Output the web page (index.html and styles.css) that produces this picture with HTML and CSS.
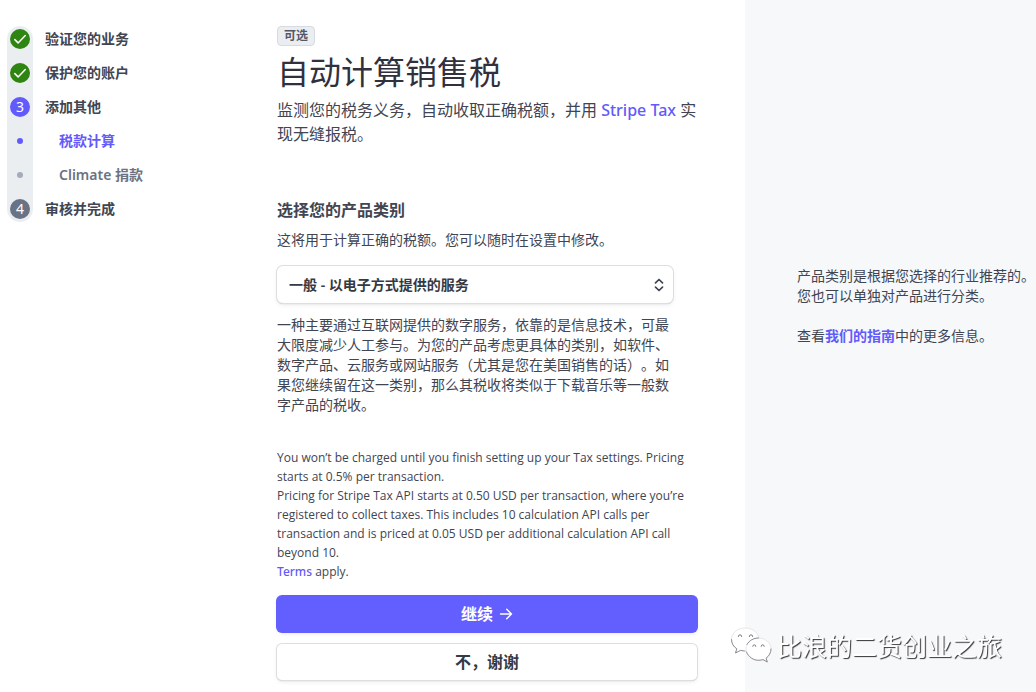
FILE: index.html
```html
<!DOCTYPE html>
<html lang="zh-CN">
<head>
    <meta charset="UTF-8">
    <meta name="viewport" content="width=device-width, initial-scale=1.0">
    <title>自动计算销售税</title>
    <link rel="stylesheet" href="styles.css">
</head>
<body>
    <div class="page">
        <nav class="sidebar">
            <ol class="steps">
                <li class="step">
                    <span class="marker done">
                        <svg width="20" height="20" viewBox="0 0 20 20" fill="none" stroke="#fff" stroke-width="1.5" stroke-linecap="round" stroke-linejoin="round"><path d="M4.800 10.600l3.300 3.300 7.200-7.400"/></svg>
                    </span>
                    <span class="step-name">验证您的业务</span>
                </li>
                <li class="step">
                    <span class="marker done">
                        <svg width="20" height="20" viewBox="0 0 20 20" fill="none" stroke="#fff" stroke-width="1.5" stroke-linecap="round" stroke-linejoin="round"><path d="M4.800 10.600l3.300 3.300 7.200-7.400"/></svg>
                    </span>
                    <span class="step-name">保护您的账户</span>
                </li>
                <li class="step">
                    <span class="marker current">3</span>
                    <span class="step-name">添加其他</span>
                </li>
                <li class="step sub active">
                    <span class="marker"><span class="dot"></span></span>
                    <span class="step-name">税款计算</span>
                </li>
                <li class="step sub">
                    <span class="marker"><span class="dot"></span></span>
                    <span class="step-name">Climate 捐款</span>
                </li>
                <li class="step">
                    <span class="marker pending">4</span>
                    <span class="step-name">审核并完成</span>
                </li>
            </ol>
        </nav>

        <main class="content">
            <span class="badge">可选</span>
            <h1>自动计算销售税</h1>
            <p class="lead">监测您的税务义务，自动收取正确税额，并用 <a href="#">Stripe Tax</a> 实现无缝报税。</p>

            <form class="tax-form">
                <h2><label for="category">选择您的产品类别</label></h2>
                <p class="hint">这将用于计算正确的税额。您可以随时在设置中修改。</p>
                <div class="select-box">
                    <select id="category" name="category">
                        <option>一般 - 以电子方式提供的服务</option>
                    </select>
                    <svg class="select-icon" width="10" height="14" viewBox="0 0 10 14" fill="none" stroke="#414552" stroke-width="1.7" stroke-linecap="round" stroke-linejoin="round"><path d="M1.500 4.800L5 1.500l3.500 3.300M1.500 9.200L5 12.500l3.500-3.300"/></svg>
                </div>
                <p class="description">一种主要通过互联网提供的数字服务，依靠的是信息技术，可最大限度减少人工参与。为您的产品考虑更具体的类别，如软件、数字产品、云服务或网站服务（尤其是您在美国销售的话）。如果您继续留在这一类别，那么其税收将类似于下载音乐等一般数字产品的税收。</p>

                <div class="fine-print" lang="en">
                    <p>You won’t be charged until you finish setting up your Tax settings. Pricing starts at 0.5% per transaction.</p>
                    <p>Pricing for Stripe Tax API starts at 0.50 USD per transaction, where you’re registered to collect taxes. This includes 10 calculation API calls per transaction and is priced at 0.05 USD per additional calculation API call beyond 10.</p>
                    <p><a href="#">Terms</a> apply.</p>
                </div>

                <button type="submit" class="btn primary">
                    继续
                    <svg width="14" height="14" viewBox="0 0 14 14" fill="none" stroke="#fff" stroke-width="1.4" stroke-linecap="round" stroke-linejoin="round"><path d="M1.500 7h11M7.700 2.200L12.500 7l-4.800 4.800"/></svg>
                </button>
                <button type="button" class="btn">不，谢谢</button>
            </form>
        </main>

        <aside class="help">
            <p>产品类别是根据您选择的行业推荐的。您也可以单独对产品进行分类。</p>
            <p>查看<a href="#">我们的指南</a>中的更多信息。</p>
        </aside>
    </div>

    <div class="watermark">
        <svg width="42" height="38" viewBox="0 0 42 38" stroke-linejoin="round">
            <g fill="#fff" stroke="#d5d7d9" stroke-width="0.6">
                <path d="M15 2C7.300 2 1.500 7 1.500 13.500c0 4 2 7.200 5.300 9.300L5.500 27l5-2.600c1.500.4 3 .6 4.500.6 8 0 14-5 14-11.500S23 2 15 2z"/>
                <path d="M28.500 12C21.500 12 16 16.800 16 23s5.500 11.300 12.500 11.300c1.600 0 3-.3 4.500-.7l4.300 2.400-1.200-3.900c3-2 4.900-5.400 4.900-9.100C41 16.800 35.500 12 28.500 12z"/>
            </g>
            <g fill="none" stroke="#77797c" stroke-width="1" stroke-linecap="round">
                <path d="M8.300 10.500a1.700 1.700 0 0 1 3.400 0M19.300 10.500a1.700 1.700 0 0 1 3.400 0M22.800 20.300a1.500 1.500 0 0 1 3 0M31.200 20.300a1.500 1.500 0 0 1 3 0"/>
                <path stroke-width="0.8" d="M1.500 13.500c0 4 2 7.200 5.300 9.300L5.500 27l5-2.600 4 .6M16.500 26c2 5 7 8.300 12 8.300 1.600 0 3-.3 4.500-.7l4.300 2.400-1.200-3.900c3-2 4.900-5.400 4.900-9.100M17 18.500c2-4 6.500-6.500 11.500-6.500"/>
            </g>
        </svg>
        <span>比浪的二货创业之旅</span>
    </div>
</body>
</html>
```

FILE: styles.css
```css
* {
    box-sizing: border-box;
}

body {
    margin: 0;
    font-family: "Noto Sans", "Noto Sans CJK SC", sans-serif;
    font-size: 14px;
    line-height: 20px;
    color: #414552;
    background-color: #fff;
    text-spacing-trim: space-all;
}

h1, h2, p, ol {
    margin: 0;
    padding: 0;
}

a {
    color: #625afa;
    font-weight: 600;
    text-decoration: none;
}

.page {
    display: grid;
    grid-template-columns: 277px 1fr 291px;
    min-height: 100vh;
}

/* Progress steps */
.sidebar {
    padding: 26px 7px;
}

.steps {
    list-style: none;
    width: 26px;
    padding: 3px;
    border-radius: 13px;
    background-color: #ebeef1;
    display: flex;
    flex-direction: column;
    gap: 14px;
}

.step {
    display: flex;
    align-items: center;
    gap: 15px;
    height: 20px;
    white-space: nowrap;
    font-weight: 600;
}

.marker {
    flex: none;
    display: flex;
    align-items: center;
    justify-content: center;
    width: 20px;
    height: 20px;
    border-radius: 50%;
    color: #fff;
    font-weight: 400;
}

.done {
    background-color: #2f8512;
}

.current {
    background-color: #625afa;
}

.pending {
    background-color: #687385;
}

.dot {
    width: 6px;
    height: 6px;
    border-radius: 50%;
    background-color: #a3acba;
}

.sub .step-name {
    padding-left: 14px;
    color: #6a7383;
}

.active .dot {
    background-color: #625afa;
}

.active .step-name {
    color: #625afa;
}

/* Main column */
.content {
    padding: 26px 48px 12px 0;
}

.badge {
    display: block;
    width: fit-content;
    padding: 0 6px;
    border: 1px solid #d5dbe1;
    border-radius: 4px;
    background-color: #ebeef1;
    font-size: 12px;
    line-height: 18px;
    font-weight: 600;
    color: #545969;
}

h1 {
    margin-top: 4px;
    font-size: 32px;
    line-height: 40px;
    font-weight: 400;
    font-family: "Noto Sans CJK SC", sans-serif;
    color: #30313d;
}

.lead {
    margin-top: 8px;
    font-size: 16px;
    line-height: 24px;
}

.lead a {
    font-weight: 500;
}

.tax-form {
    margin-top: 52px;
}

h2 {
    font-size: 16px;
    line-height: 24px;
    font-weight: 600;
}

.hint {
    margin-top: 8px;
}

.select-box {
    position: relative;
    margin: 16px 24px 12px 0;
}

.select-box select {
    appearance: none;
    display: block;
    width: 100%;
    height: 37px;
    padding: 0 32px 0 12px;
    border: none;
    border-radius: 6px;
    background-color: #fff;
    box-shadow: 0 0 0 1px #dcdee0, 0 1px 1px rgba(0, 0, 0, 0.24), 0 2px 5px rgba(0, 0, 0, 0.08);
    font: inherit;
    font-weight: 600;
    color: #353a44;
}

.select-icon {
    position: absolute;
    top: 12px;
    right: 9px;
    pointer-events: none;
}

.description {
    margin-right: 24px;
}

.fine-print {
    margin: 33px 0 15px;
    font-family: "Open Sans", sans-serif;
    font-size: 12px;
    line-height: 19px;
}

.fine-print a {
    font-family: "Noto Sans", sans-serif;
    font-weight: 500;
}

.btn {
    display: flex;
    align-items: center;
    justify-content: center;
    gap: 6px;
    width: 100%;
    height: 36px;
    margin-top: 12px;
    padding: 0;
    border: none;
    border-radius: 5px;
    background-color: #fff;
    box-shadow: 0 0 0 1px #dcdee0, 0 1px 1px rgba(0, 0, 0, 0.24), 0 2px 5px rgba(0, 0, 0, 0.08);
    font: inherit;
    font-size: 16px;
    font-weight: 600;
    color: #353a44;
    cursor: pointer;
}

.primary {
    background-color: #635fff;
    box-shadow: 0 0 0 1px #635fff, 0 1px 1px rgba(0, 0, 0, 0.12), 0 2px 5px rgba(0, 0, 0, 0.08);
    color: #fff;
}

/* Help column */
.help {
    display: flex;
    flex-direction: column;
    gap: 20px;
    padding: 266px 0 0 52px;
    background-color: #f6f8fa;
}

.watermark {
    position: fixed;
    right: 34px;
    bottom: 27px;
    display: flex;
    align-items: center;
    gap: 5px;
    font-family: "Noto Sans CJK SC", sans-serif;
    font-size: 25px;
    line-height: 40px;
    color: #fff;
    text-shadow: 1px 1px 1px #333;
}
```
